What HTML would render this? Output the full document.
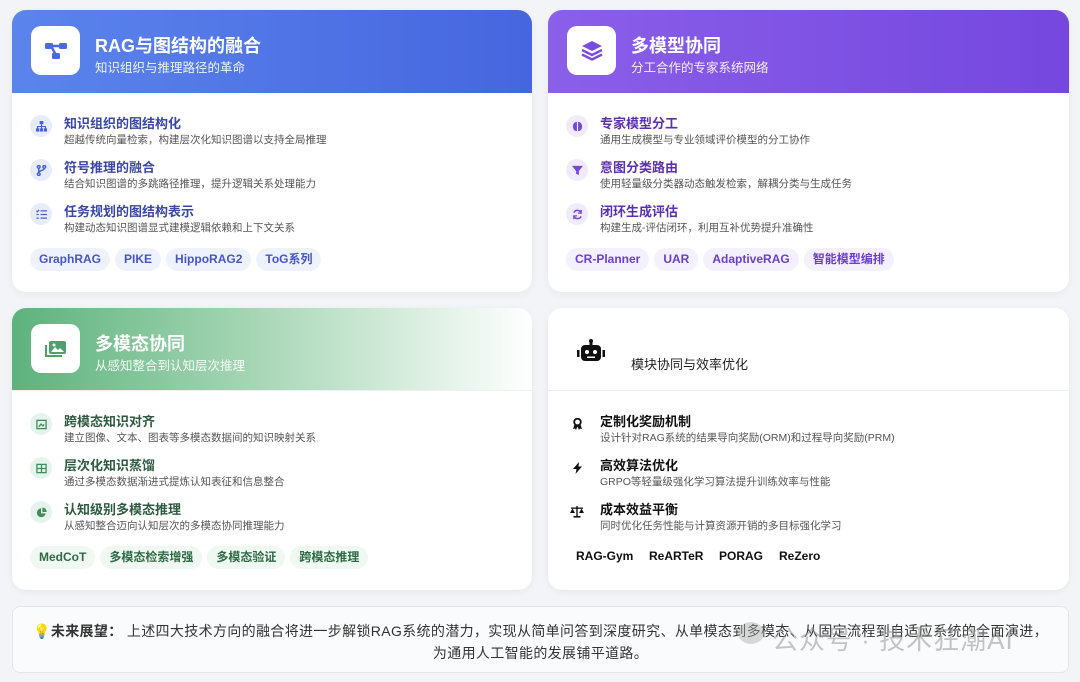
<!DOCTYPE html>
<html><head><meta charset="utf-8"><style>
*{margin:0;padding:0;box-sizing:border-box}
body{width:1080px;height:682px;background:#f3f4f7;font-family:"Liberation Sans","Noto Sans CJK SC",sans-serif;position:relative;overflow:hidden}
.card{position:absolute;background:#fff;border-radius:14px;overflow:hidden;box-shadow:0 2px 8px rgba(0,0,0,.05)}
.hd{height:83px;position:relative}
.ib{position:absolute;left:19px;top:16px;width:49px;height:49px;background:#fff;border-radius:10px;display:flex;align-items:center;justify-content:center}
.t{position:absolute;left:83px;top:22px;font-size:18px;font-weight:bold;color:#fff}
.s{position:absolute;left:83px;top:47px;font-size:12.5px;color:rgba(255,255,255,.9)}
.it{position:absolute;left:18px}
.ic{position:absolute;left:0;top:2px;width:22px;height:22px;border-radius:50%;display:flex;align-items:center;justify-content:center}
.it b{position:absolute;left:34px;top:0;font-size:13px;white-space:nowrap}
.it span{position:absolute;left:34px;top:19px;font-size:10.5px;color:#555;white-space:nowrap}
.tags{position:absolute;left:18px;display:flex;gap:5px}
.tags div{height:23px;line-height:23px;padding:0 9px;border-radius:12px;font-size:12px;font-weight:bold;white-space:nowrap}
.pt{position:absolute;top:241px;font-size:12px;font-weight:bold;color:#111;white-space:nowrap}
</style></head><body>

<div class="card" style="left:12px;top:10px;width:520px;height:282px">
 <div class="hd" style="background:linear-gradient(90deg,#5b84ec,#4666df)">
  <div class="ib"><svg width="26" height="26" viewBox="0 0 26 26"><rect x="2" y="5" width="8" height="6" rx="1.5" fill="#4a6ae2"/><rect x="16" y="5" width="8" height="6" rx="1.5" fill="#4a6ae2"/><rect x="9" y="15" width="8" height="6" rx="1.5" fill="#4a6ae2"/><path d="M8 8h10M8 8l5 9" stroke="#4a6ae2" stroke-width="2.4"/></svg></div>
  <div class="t">RAG与图结构的融合</div><div class="s">知识组织与推理路径的革命</div>
 </div>
 <div class="it" style="top:103px"><div class="ic" style="background:#e6ecfc"><svg width="11" height="11" viewBox="0 0 12 12" fill="#4760d6"><rect x="4" y="0" width="4" height="3.5"/><rect x="0" y="8" width="3.5" height="3.5"/><rect x="4.2" y="8" width="3.5" height="3.5"/><rect x="8.5" y="8" width="3.5" height="3.5"/><path d="M6 3.5v4.5M1.7 8V6h8.6v2" stroke="#4760d6" stroke-width="1.2" fill="none"/></svg></div><b style="color:#3a47a6">知识组织的图结构化</b><span>超越传统向量检索，构建层次化知识图谱以支持全局推理</span></div>
 <div class="it" style="top:147px"><div class="ic" style="background:#e6ecfc"><svg width="11" height="11" viewBox="0 0 12 12" fill="none" stroke="#4760d6" stroke-width="1.6"><circle cx="3" cy="2" r="1.5"/><circle cx="3" cy="10" r="1.5"/><circle cx="9" cy="2" r="1.5"/><path d="M3 3.5v5M9 3.5c0 3-6 2-6 5"/></svg></div><b style="color:#3a47a6">符号推理的融合</b><span>结合知识图谱的多跳路径推理，提升逻辑关系处理能力</span></div>
 <div class="it" style="top:191px"><div class="ic" style="background:#e6ecfc"><svg width="11" height="11" viewBox="0 0 12 12" stroke="#4760d6" stroke-width="1.4" fill="none"><path d="M5 2h7M5 6h7M5 10h7M0.5 2l1 1 2-2M0.5 6h2.5M0.5 10h2.5"/></svg></div><b style="color:#3a47a6">任务规划的图结构表示</b><span>构建动态知识图谱显式建模逻辑依赖和上下文关系</span></div>
 <div class="tags" style="top:238px"><div style="background:#eef2fd;color:#4656c4">GraphRAG</div><div style="background:#eef2fd;color:#4656c4">PIKE</div><div style="background:#eef2fd;color:#4656c4">HippoRAG2</div><div style="background:#eef2fd;color:#4656c4">ToG系列</div></div>
</div>

<div class="card" style="left:548px;top:10px;width:521px;height:282px">
 <div class="hd" style="background:linear-gradient(90deg,#8a5fe9,#7547df)">
  <div class="ib"><svg width="26" height="26" viewBox="0 0 26 26"><path d="M13 3l10 5-10 5-10-5z" fill="#7a4de2"/><path d="M3 12l10 5 10-5M3 16.5l10 5 10-5" stroke="#7a4de2" stroke-width="2.4" fill="none"/></svg></div>
  <div class="t">多模型协同</div><div class="s">分工合作的专家系统网络</div>
 </div>
 <div class="it" style="top:103px"><div class="ic" style="background:#f0eafd"><svg width="11" height="11" viewBox="0 0 12 12" fill="#7448db"><path d="M5.4 1C2 1 1 4 1 6s1 5 4.4 5zM6.6 1C10 1 11 4 11 6s-1 5-4.4 5z"/></svg></div><b style="color:#5a30b0">专家模型分工</b><span>通用生成模型与专业领域评价模型的分工协作</span></div>
 <div class="it" style="top:147px"><div class="ic" style="background:#f0eafd"><svg width="11" height="11" viewBox="0 0 12 12" fill="#7448db"><path d="M0 1h12L7.5 6.5V11l-3-1.5V6.5z"/></svg></div><b style="color:#5a30b0">意图分类路由</b><span>使用轻量级分类器动态触发检索，解耦分类与生成任务</span></div>
 <div class="it" style="top:191px"><div class="ic" style="background:#f0eafd"><svg width="11" height="11" viewBox="0 0 12 12" fill="none" stroke="#7448db" stroke-width="1.6"><path d="M10 4.5A4.3 4.3 0 0 0 2 4M2 7.5A4.3 4.3 0 0 0 10 8"/><path d="M10 1v3.5H6.5M2 11V7.5h3.5" stroke-width="1.4"/></svg></div><b style="color:#5a30b0">闭环生成评估</b><span>构建生成-评估闭环，利用互补优势提升准确性</span></div>
 <div class="tags" style="top:238px"><div style="background:#f4f0fd;color:#6a3fd0">CR-Planner</div><div style="background:#f4f0fd;color:#6a3fd0">UAR</div><div style="background:#f4f0fd;color:#6a3fd0">AdaptiveRAG</div><div style="background:#f4f0fd;color:#6a3fd0">智能模型编排</div></div>
</div>

<div class="card" style="left:12px;top:308px;width:520px;height:282px">
 <div class="hd" style="background:linear-gradient(90deg,#5db27d,#a4d5b3 45%,#fff 100%);border-bottom:1px solid #eef0f2">
  <div class="ib"><svg width="26" height="26" viewBox="0 0 26 26"><rect x="6" y="5" width="17" height="13" rx="2" fill="#4fa06d"/><path d="M3 9v11h16" stroke="#4fa06d" stroke-width="2" fill="none"/><path d="M8 16l4-5 3 3 2-2 4 4z" fill="#fff"/><circle cx="11" cy="9" r="1.5" fill="#fff"/></svg></div>
  <div class="t">多模态协同</div><div class="s">从感知整合到认知层次推理</div>
 </div>
 <div class="it" style="top:103px"><div class="ic" style="background:#e5f4ea"><svg width="11" height="11" viewBox="0 0 12 12" fill="none" stroke="#3f8d5c" stroke-width="1.4"><rect x="1" y="1.5" width="10" height="9"/><path d="M3 8.5l2.5-3 2 2 1.5-1.5" /></svg></div><b style="color:#2e5a3f">跨模态知识对齐</b><span>建立图像、文本、图表等多模态数据间的知识映射关系</span></div>
 <div class="it" style="top:147px"><div class="ic" style="background:#e5f4ea"><svg width="11" height="11" viewBox="0 0 12 12" fill="none" stroke="#3f8d5c" stroke-width="1.4"><rect x="1" y="1.5" width="10" height="9"/><path d="M1 6h10M6 1.5v9"/></svg></div><b style="color:#2e5a3f">层次化知识蒸馏</b><span>通过多模态数据渐进式提炼认知表征和信息整合</span></div>
 <div class="it" style="top:191px"><div class="ic" style="background:#e5f4ea"><svg width="11" height="11" viewBox="0 0 12 12" fill="#3f8d5c"><path d="M5.5 1.5A4.8 4.8 0 1 0 10.5 7H5.5z"/><path d="M7 0.5A4.5 4.5 0 0 1 11.5 5.5H7z"/></svg></div><b style="color:#2e5a3f">认知级别多模态推理</b><span>从感知整合迈向认知层次的多模态协同推理能力</span></div>
 <div class="tags" style="top:238px"><div style="background:#f0f8f2;color:#2e6a45">MedCoT</div><div style="background:#f0f8f2;color:#2e6a45">多模态检索增强</div><div style="background:#f0f8f2;color:#2e6a45">多模态验证</div><div style="background:#f0f8f2;color:#2e6a45">跨模态推理</div></div>
</div>

<div class="card" style="left:548px;top:308px;width:521px;height:282px">
 <div class="hd" style="border-bottom:1px solid #eceef1">
  <svg style="position:absolute;left:29px;top:31px" width="28" height="23" viewBox="0 0 28 23"><rect x="4" y="6" width="20" height="16" rx="4" fill="#111"/><rect x="12.5" y="1" width="3" height="5" fill="#111"/><circle cx="14" cy="2" r="2" fill="#111"/><rect x="0" y="11" width="2.5" height="7" fill="#111"/><rect x="25.5" y="11" width="2.5" height="7" fill="#111"/><circle cx="10" cy="13" r="2" fill="#fff"/><circle cx="18" cy="13" r="2" fill="#fff"/><rect x="10" y="17.5" width="8" height="1.5" fill="#fff"/></svg>
  <div style="position:absolute;left:83px;top:46px;font-size:13px;color:#222">模块协同与效率优化</div>
 </div>
 <div class="it" style="top:103px"><div class="ic"><svg width="11" height="12" viewBox="0 0 11 12"><circle cx="5.5" cy="4" r="3.3" fill="none" stroke="#111" stroke-width="1.8"/><path d="M2.5 6.5L1 11l2-.5 1 1.5 1.5-3.5 1.5 3.5 1-1.5 2 .5-1.5-4.5" fill="#111"/></svg></div><b style="color:#111">定制化奖励机制</b><span>设计针对RAG系统的结果导向奖励(ORM)和过程导向奖励(PRM)</span></div>
 <div class="it" style="top:147px"><div class="ic"><svg width="9" height="12" viewBox="0 0 9 12"><path d="M6 0L0 7h3.5L2.5 12 9 4.5H5.5z" fill="#111"/></svg></div><b style="color:#111">高效算法优化</b><span>GRPO等轻量级强化学习算法提升训练效率与性能</span></div>
 <div class="it" style="top:191px"><div class="ic"><svg width="14" height="12" viewBox="0 0 14 12" fill="#111"><rect x="6.3" y="0" width="1.4" height="10"/><rect x="1" y="1.5" width="12" height="1.3"/><rect x="3.5" y="10" width="7" height="1.6"/><path d="M0 7h5L2.5 2.5zM9 7h5l-2.5-4.5z"/></svg></div><b style="color:#111">成本效益平衡</b><span>同时优化任务性能与计算资源开销的多目标强化学习</span></div>
 <div class="pt" style="left:28px">RAG-Gym</div>
 <div class="pt" style="left:101px">ReARTeR</div>
 <div class="pt" style="left:171px">PORAG</div>
 <div class="pt" style="left:231px">ReZero</div>
</div>

<div style="position:absolute;left:12px;top:606px;width:1057px;height:67px;background:#fafbfc;border:1px solid #e4e6ea;border-radius:8px;text-align:center;font-size:14px;color:#333;line-height:22px;padding-top:13px;letter-spacing:0.35px">
 <span style="color:#f0a020">💡</span><b>未来展望：</b> 上述四大技术方向的融合将进一步解锁RAG系统的潜力，实现从简单问答到深度研究、从单模态到多模态、从固定流程到自适应系统的全面演进，<br>为通用人工智能的发展铺平道路。
</div>
<div style="position:absolute;left:738px;top:622px;width:26px;height:22px;border-radius:50%;background:rgba(170,170,170,.45)"></div>
<div style="position:absolute;left:772px;top:620px;font-size:26px;color:rgba(150,150,150,.55);letter-spacing:1px">公众号 · 技术狂潮AI</div>
</body></html>
